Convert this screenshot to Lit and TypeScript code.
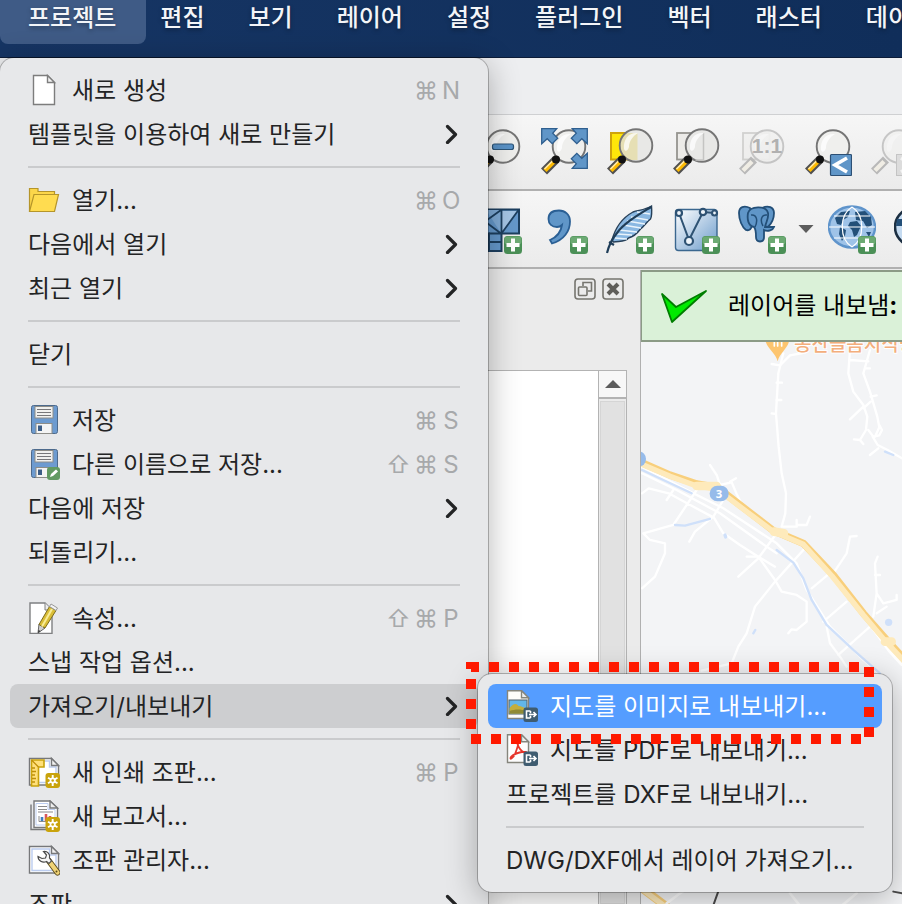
import { LitElement, html, svg, css, nothing } from "lit";
import { customElement, property } from "lit/decorators.js";
import { classMap } from "lit/directives/class-map.js";

type Entry =
  | { kind: "separator" }
  | { kind: "item"; label: string; icon?: string; keys?: string[]; submenu?: boolean; state?: "open" | "selected" };

const sep: Entry = { kind: "separator" };
const item = (label: string, extra: object = {}): Entry => ({ kind: "item", label, ...extra });

const PROJECT_MENU: Entry[] = [
  item("새로 생성", { icon: "file", keys: ["⌘", "N"] }),
  item("템플릿을 이용하여 새로 만들기", { submenu: true }),
  sep,
  item("열기...", { icon: "folder", keys: ["⌘", "O"] }),
  item("다음에서 열기", { submenu: true }),
  item("최근 열기", { submenu: true }),
  sep,
  item("닫기"),
  sep,
  item("저장", { icon: "save", keys: ["⌘", "S"] }),
  item("다른 이름으로 저장...", { icon: "saveAs", keys: ["⇧", "⌘", "S"] }),
  item("다음에 저장", { submenu: true }),
  item("되돌리기..."),
  sep,
  item("속성...", { icon: "properties", keys: ["⇧", "⌘", "P"] }),
  item("스냅 작업 옵션..."),
  item("가져오기/내보내기", { submenu: true, state: "open" }),
  sep,
  item("새 인쇄 조판...", { icon: "layout", keys: ["⌘", "P"] }),
  item("새 보고서...", { icon: "report" }),
  item("조판 관리자...", { icon: "manager" }),
  item("조판", { submenu: true }),
];

const EXPORT_MENU: Entry[] = [
  item("지도를 이미지로 내보내기...", { icon: "exportImage", state: "selected" }),
  item("지도를 PDF로 내보내기...", { icon: "exportPdf" }),
  item("프로젝트를 DXF로 내보내기..."),
  sep,
  item("DWG/DXF에서 레이어 가져오기..."),
];

const MENUS = ["프로젝트", "편집", "보기", "레이어", "설정", "플러그인", "벡터", "래스터", "데이터베이스"];

/* Shared icon fragments */
const floppy = svg`
  <rect x="3.5" y="1.5" width="26" height="28" rx="2" fill="#6d9bd0" stroke="#4d6a8c"/>
  <rect x="7" y="2.500" width="18" height="11.500" fill="#f1f1ef" stroke="#8d8d88"/>
  <path d="M9 5.500h14M9 8.500h14M9 11.500h14" stroke="#77777a" stroke-width="1.200"/>
  <rect x="8" y="19.500" width="16" height="10" fill="#f4f4f4" stroke="#8d8d88"/>
  <rect x="10" y="21.500" width="4" height="5.500" fill="#3c5d86"/>`;

const starBadge = svg`
  <rect x="17.500" y="17" width="14.500" height="15" rx="3" fill="#c9a30c"/>
  <path d="M24.700 19v11M20 21.700l9.500 5.600M29.500 21.700L20 27.300" stroke="#fff" stroke-width="1.900"/>
  <circle cx="24.700" cy="24.500" r="3" fill="#fff"/><circle cx="24.700" cy="24.500" r="1.300" fill="#c9a30c"/>`;

const exportBadge = svg`
  <rect x="17.500" y="17.500" width="14.500" height="14.500" rx="2.500" fill="#3f5c70"/>
  <path d="M24.500 21h-4v7h4M24.500 21v2.300M24.500 28v-2.300M23 24.500h7M27.500 22l2.500 2.500-2.500 2.500" fill="none" stroke="#fff" stroke-width="1.600"/>`;

const sheet = svg`
  <path d="M1.500 2.500h22l7 7v19.500h-29z" fill="#fff" stroke="#77787a" stroke-width="1.400"/>
  <path d="M4 5h17.500v6h6.500v15.500H4z" fill="none" stroke="#bccdf0" stroke-width="1.400"/>
  <path d="M23.500 2.500v7h7z" fill="#f1f1f1" stroke="#77787a" stroke-width="1.400"/>`;

const MENU_ICONS: Record<string, unknown> = {
  file: svg`<path d="M5.500 1.500h14l7 7v22h-21z" fill="#fff" stroke="#7d7d7d" stroke-width="1.400"/>
    <path d="M19.500 1.500v7h7z" fill="#f2f2f2" stroke="#7d7d7d" stroke-width="1.400"/>`,
  folder: svg`<path d="M1.500 27V4.500h8.500v3h16.500V12" fill="#fcd64a" stroke="#b5952a" stroke-width="1.200"/>
    <path d="M1.500 27.500L6 10.500h24.500L26.500 27.500z" fill="#ffdc50" stroke="#b5952a" stroke-width="1.200"/>`,
  save: floppy,
  saveAs: svg`${floppy}<rect x="19" y="19" width="13" height="13" rx="3" fill="#629a62"/>
    <path d="M22 29l1-3 5-4.500 2 2-5 4.500z" fill="#fff"/>`,
  properties: svg`<path d="M2 1h15l7 7v23.500H2z" fill="#fff" stroke="#7f8082" stroke-width="1.400"/>
    <path d="M17 1v7h7" fill="#eee" stroke="#7f8082"/>
    <path d="M10 31l1-9 6 4z" fill="#cfcfcf" stroke="#666"/>
    <path d="M11 22.500L21.500 4.500l6.500 4L17 26z" fill="#d9bd36" stroke="#7c6b1c"/>
    <path d="M14 24.500L24 7" stroke="#f8ec98" stroke-width="2"/>
    <path d="M21.500 4.500l1.500-2.500 6.500 4-1.500 2.500z" fill="#f3f3f3" stroke="#999"/>
    <path d="M10 31l.5-3 2 1z" fill="#333"/>`,
  layout: svg`${sheet}<path d="M3.500 4H16v7h-5.500v19H3.500z" fill="#ffe07a" stroke="#c9a30c" stroke-width="1.600"/>
    <path d="M3.500 4l7 7M4 12h3M4 15.500h4M4 19h3M4 22.500h4M4 26h3" stroke="#c08f0a" stroke-width="1.300"/>${starBadge}`,
  report: svg`<path d="M3 4.500v25h20" fill="none" stroke="#77787a" stroke-width="1.400"/>
    <path d="M6 1h16l7.500 7v19.500H6z" fill="#fff" stroke="#77787a" stroke-width="1.400"/>
    <path d="M8 3.500h12v6h7V25H8z" fill="none" stroke="#bccdf0"/>
    <path d="M22 1v7h7.500z" fill="#eee" stroke="#77787a" stroke-width="1.400"/>
    <path d="M10 6.500h9M10 9.500h9M10 12h15" stroke="#8a8a8c" stroke-width="1.200"/>
    <path d="M11 16v5.500h14" fill="none" stroke="#8a8a8c"/>
    <path d="M14 21v-4" stroke="#3f7fc0" stroke-width="2.600"/><path d="M18 21v-7" stroke="#d9565a" stroke-width="2.600"/><path d="M22 21v-5" stroke="#d9565a" stroke-width="2.600"/>${starBadge}`,
  manager: svg`${sheet}
    <path d="M21 17l8.500 11.500" stroke="#5a4a1a" stroke-width="6" stroke-linecap="round"/>
    <path d="M21 17l8.500 11.500" stroke="#f0d376" stroke-width="4.200" stroke-linecap="round"/>
    <path d="M10 12.500c0 4 4.500 7 8.500 5l2.500 2 2.500-2.500-2-3c1-4-2-7-6-6.500l3 3.500-1 3-3.500.5z" fill="#f6f6f6" stroke="#4c4c4c" stroke-width="1.200"/>
    <circle cx="28.500" cy="27.500" r="1" fill="#5a4a1a"/>`,
  exportImage: svg`<path d="M1.500.700h14l7 7V28.500h-21z" fill="#fdfdfb" stroke="#85857c" stroke-width="1.400"/>
    <path d="M15.500.700v7h7z" fill="#eee" stroke="#85857c" stroke-width="1.400"/>
    <rect x="3" y="10" width="18" height="14" fill="#62b6ea" stroke="#50606c"/>
    <path d="M3.500 18c4-5 7-5 9-2 3 0 5 2 8 2v5.500h-17z" fill="#c3ae3c"/>
    <path d="M3.500 21c6-2 11-2 17 0v2.500h-17z" fill="#8f8a35"/>${exportBadge}`,
  exportPdf: svg`<path d="M1.500.700h14l7 7V28.500h-21z" fill="#fdfdfd" stroke="#85857c" stroke-width="1.400"/>
    <path d="M15.500.700v7h7z" fill="#eee" stroke="#85857c" stroke-width="1.400"/>
    <path d="M12 8c-2 1 2 10 8 11 3-2-9-2-15 4-2 3 2 2 4-3s4-10 3-12z" fill="none" stroke="#e5352b" stroke-width="1.800"/>${exportBadge}`,
};

const handle = svg`
  <path d="M16 33.500L4 45.500" stroke="#505050" stroke-width="8.500"/>
  <path d="M14 35.500L5 44.500" stroke="#fcb900" stroke-width="4.500"/>
  <path d="M13 34.500L4.500 43" stroke="#ffe9a8" stroke-width="1.600"/>
  <circle cx="16" cy="33.500" r="4" fill="#111"/>`;

const fadedHandle = svg`
  <path d="M16 33.500L4 45.500" stroke="#555" stroke-width="8.500"/>
  <path d="M14 35.500L5 44.500" stroke="#f4ecd4" stroke-width="4.500"/>`;

const lens = svg`
  <circle cx="29" cy="20.500" r="16.300" fill="#eeeeec" fill-opacity=".9" stroke="#757575" stroke-width="1.900"/>
  <path d="M17 24C16 14 22 7 31 8c-5 3-9 8-9 14-1 4-4 5-5 2z" fill="#fff" fill-opacity=".75"/>`;

const plus = svg`
  <rect x="30" y="33" width="18" height="18" rx="3.500" fill="#4b9057"/>
  <rect x="30.500" y="33.500" width="17" height="8" rx="3" fill="#6caa73"/>
  <path d="M39 35.500v13M32.500 42h13" stroke="#fff" stroke-width="4"/>`;

const TOOL_ICONS: Record<string, unknown> = {
  zoomOut: svg`${lens}${handle}<rect x="18.500" y="18" width="21" height="5.500" rx="2" fill="#5a93c8" stroke="#2d5578" stroke-width="1.200"/>`,
  zoomFull: svg`${lens}${handle}<g fill="#6096c8" stroke="#2f5f8f" stroke-width="1.300">
    <path d="M1.700 2.700h15l-4 4.500 5 5-5.500 5.500-5-5-5.500 5z"/>
    <path d="M47.300 2.700h-15l4 4.500-5 5 5.500 5.500 5-5 5.500 5z"/>
    <path d="M47.300 42.300h-15l4-4.500-5-5 5.500-5.500 5 5 5.500-5z"/></g>`,
  zoomSelection: svg`<rect x="5" y="7" width="26.500" height="26.500" fill="#ffe60a" stroke="#cfa30c" stroke-width="2"/>
    <circle cx="30" cy="19.500" r="16.300" fill="#e8e8e6"/>
    <path d="M31.500 7V34H23A16.300 16.300 0 0 1 19.500 7z" fill="#e6dfb4"/>
    <circle cx="30" cy="19.500" r="16.300" fill="none" stroke="#757575" stroke-width="1.900"/>
    <path d="M18 23C17 13 23 6 32 7c-5 3-9 8-9 14-1 4-4 5-5 2z" fill="#fff" fill-opacity=".75"/>${handle}`,
  zoomLayer: svg`<rect x="5" y="7" width="26.500" height="26.500" fill="#ecebe8" stroke="#95948f" stroke-width="1.800"/>
    <circle cx="30" cy="19.500" r="16.300" fill="#e8e8e6" stroke="#757575" stroke-width="1.900"/>
    <path d="M31.500 7v27h-8" fill="none" stroke="#c4c4c2" stroke-width="1.500"/>
    <path d="M18 23C17 13 23 6 32 7c-5 3-9 8-9 14-1 4-4 5-5 2z" fill="#fff" fill-opacity=".75"/>${handle}`,
  zoomNative: svg`<g opacity=".35"><rect x="5" y="7" width="26.500" height="26.500" fill="#ecebe8" stroke="#95948f" stroke-width="1.800"/>${lens}${fadedHandle}</g>
    <text class="ratio" x="29" y="27" text-anchor="middle">1:1</text>`,
  zoomLast: svg`${lens}${handle}<rect x="26.500" y="28.500" width="21" height="21" rx="1" fill="#6096c8" stroke="#2c4f74" stroke-width="1.200"/>
    <path d="M43 32L31 39l12 7" fill="none" stroke="#fff" stroke-width="3.600"/>`,
  zoomNext: svg`<g opacity=".35">${lens}${fadedHandle}
    <rect x="26.500" y="28.500" width="21" height="21" fill="#bbb" stroke="#777"/><path d="M31 32l12 7-12 7" fill="none" stroke="#fff" stroke-width="3.600"/></g>`,
  mesh: svg`<path d="M2 6.500h43v24H27.500v17.500H15V30.500H2z" fill="#6598cb" stroke="#1d3f5f" stroke-width="2"/>
    <path d="M28 30V8h16z" fill="#a5c5e5"/><path d="M12 7l15 0v23z" fill="#7fabd6"/>
    <path d="M27.500 6.500v24M27.500 30.500L44.500 7M27 7L11 18.500 27 30.500M15 30.500h12.500M15 39h12.500" fill="none" stroke="#1d3f5f" stroke-width="1.800"/>${plus}`,
  comma: svg`<path d="M19 7.500C12 7.500 8.500 11 8.500 16s3.500 8 8.500 8c2 0 3.500-.5 5-2-1 7-5 12-12 15l2 3.500C24 37 30 28 30 18.500 30 11.500 25 7.500 19 7.500z" fill="#6096c8" stroke="#2a5f94" stroke-width="1.800"/>${plus}`,
  feather: svg`<path d="M6 37C9 26 16 15 27 9c6-2 12-2 18.500-6 .5 6 .5 10-1 13-4 3-6 7-10 10-3 4-8 8-12 9-3 4-8 3-15 4z" fill="#8ab8e2" stroke="#274059" stroke-width="1.400"/>
    <path d="M25 14l17 3M21 18l18 3M17 22l18 3M13 27l18 2M11 31l15 1M9 35l12 1M31 9l13 2" stroke="#e9f3fb" stroke-width="1.300"/>
    <path d="M1 50c2-8 4-13 10-20C18 20 32 12 45 4M3 39l5 3" fill="none" stroke="#1f3d58" stroke-width="2.200"/>${plus}`,
  nodes: svg`<defs><linearGradient id="nodeFill" x1="0" y1="0" x2="1" y2="1"><stop offset="0" stop-color="#fff"/><stop offset="1" stop-color="#6b9bcb"/></linearGradient></defs>
    <rect x="3.500" y="6.500" width="41.500" height="41" rx="3" fill="url(#nodeFill)" stroke="#3b678f" stroke-width="1.400"/>
    <path d="M7 10l10 27L31 9l12 1" fill="none" stroke="#2e5273" stroke-width="2"/>
    <g fill="#eef4fa" stroke="#2e5273" stroke-width="2.200"><circle cx="7" cy="10" r="3"/><circle cx="17" cy="38" r="4"/><circle cx="31" cy="9" r="3.200"/><circle cx="42.500" cy="10" r="2.500"/></g>${plus}`,
  elephant: svg`<g fill="#6096c8" stroke="#234f78" stroke-width="1.800">
    <path d="M12 5C6 2 1 4 1 10c0 7 3 14 7 17 3 1 5-1 6-4z"/>
    <path d="M24 5c6-3 12-1 12 5s-3 11-6 14l-6-1z"/>
    <path d="M10 10c2-7 18-8 20 0 1 5-2 9-3 14l9 0c-1 3-6 5-10 3v7c0 6-8 6-8 0 0-5 0-8-2-10-6-1-7-8-6-14z"/></g>
    <path d="M13 12c6-1 7 6 4 12M29 12c-6-1-7 6-4 11" fill="none" stroke="#234f78" stroke-width="1.500"/>${plus}`,
  globe: svg`<ellipse cx="24" cy="24" rx="23" ry="20.500" fill="#9fc3e8" stroke="#5f94cb" stroke-width="2.400"/>
    <path d="M7 15l6-6 9-1-2 6-5 3-2 5-4-1zM12 24l6 3-1 6-3 5-3-7zM27 9l10-1 6 6 1 8-5 3-4-7-7-1zM22 19l7-1 4 5-4 9-3 2-2-7-4-4zM38 29l5 0-2 5z" fill="#234f78"/>
    <path d="M1 24h46M6 13h36M6 35h28M24 4c-13 8-13 32 0 40M24 4c13 8 13 32 0 40" fill="none" stroke="#fff" stroke-width="1.200"/>${plus}`,
  globeDark: svg`<ellipse cx="24" cy="24" rx="23" ry="20.500" fill="#c5dbf1" stroke="#1c2f42" stroke-width="2.600"/><path d="M3 16h20v7H2z" fill="#234f78"/>`,
};

@customElement("menu-panel")
class MenuPanel extends LitElement {
  @property({ attribute: false }) entries: Entry[] = [];
  @property() label = "";

  static styles = css`
    :host {
      display: block;
      box-sizing: border-box;
      padding: 10px;
      font: 400 24px/44px Inter, "Noto Sans CJK KR", sans-serif;
      color: #232425;
      background: #e7e8ea;
      border-radius: 14px;
      box-shadow: 0 0 0 1px rgba(0, 0, 0, 0.25), 0 6px 32px rgba(0, 0, 0, 0.3);
    }
    .row {
      display: flex;
      align-items: center;
      gap: 12px;
      width: 100%;
      height: 44px;
      margin: 0;
      padding: 0 18px;
      border: 0;
      border-radius: 8px;
      background: none;
      color: inherit;
      font: inherit;
      text-align: left;
      white-space: nowrap;
    }
    .open { background: #cdced0; }
    .selected { background: #559dff; color: #fff; }
    .icon { flex: none; width: 32px; height: 32px; }
    .text { flex: 1; padding-top: 2px; }
    .keys { display: flex; gap: 4px; padding-top: 2px; color: #a7a9ab; }
    .key { width: 18px; text-align: center; }
    .mod { width: 24px; }
    .arrow { flex: none; width: 16px; height: 20px; }
    .line { height: 2px; margin: 10px 18px; border: 0; background: #cacbcd; }
  `;

  render() {
    return html`<div role="menu" aria-label=${this.label}>
      ${this.entries.map((e) =>
        e.kind === "separator"
          ? html`<hr class="line" />`
          : html`<button role="menuitem" class=${classMap({ row: true, open: e.state === "open", selected: e.state === "selected" })}>
              ${e.icon ? html`<svg class="icon" viewBox="0 0 32 32" aria-hidden="true">${MENU_ICONS[e.icon]}</svg>` : nothing}
              <span class="text">${e.label}</span>
              ${e.keys
                ? html`<span class="keys">${e.keys.map((k) => html`<span class=${classMap({ key: true, mod: k === "⌘" || k === "⇧" })}>${k}</span>`)}</span>`
                : nothing}
              ${e.submenu
                ? html`<svg class="arrow" viewBox="0 0 16 20" aria-hidden="true"><path d="M3.500 2.500L11.500 10.500 3.500 18.500" fill="none" stroke="#232425" stroke-width="3.200" stroke-linecap="round" stroke-linejoin="round"/></svg>`
                : nothing}
            </button>`
      )}
    </div>`;
  }
}

@customElement("map-canvas")
class MapCanvas extends LitElement {
  static styles = css`
    :host { display: block; background: #f3f4f6; overflow: hidden; }
    svg { display: block; width: 100%; height: 100%; }
    .place { font: 500 57px "Noto Sans CJK KR", sans-serif; fill: #f3ae7c; stroke: #fff; stroke-width: 6px; paint-order: stroke; }
    .route { font: 700 34px "Noto Sans", sans-serif; fill: #fff; }
  `;
  render() {
    return html`<svg role="img" aria-label="지도">
      <g transform="translate(-11 -2) scale(.3333)" fill="none" stroke-linecap="round" stroke-linejoin="round">
        <g stroke="#fff" stroke-width="7">
          <path d="M460 40L445 100 438 220 446 320 455 400 468 460 466 520 455 560"/>
          <path d="M425 72l25 4 30-30 45-8M440 128l16 0M440 180l14 0M425 220l12 2"/>
          <path d="M660 30L655 100 670 155 700 195 712 230 708 270 690 300 672 298M700 200l-40 38M720 30L700 100 720 155 742 230 748 262 735 290M722 185l-22 20M715 270l15 20 18-4 8-16-8-15M728 290l15 25 30 15 43 25M660 60l55 4M705 85l15 0M722 170l18-4M690 300l10 12M745 325l-25 20"/>
          <path d="M240 375l20 30 10 30 35-8 15 35 20 40M300 425l18-10"/>
          <path d="M36 380L150 440 280 505 440 610 500 670 530 750 600 860 700 960 760 1010"/>
          <path d="M36 400L140 450 270 520 410 620 440 640"/>
          <path d="M36 460l20-15 60 15 55 30 75 40M110 480l20-30M200 450L130 555 40 580 60 600 105 610 105 640 75 710 36 745"/>
          <path d="M280 480L250 530 195 575 178 605M250 530l30 50 50 35 55 35 50 70 20 35 45 10 30 20 0 60-30 25-15-2-10 12"/>
          <path d="M440 580L385 655 325 710M350 650l35 0 50 30M520 630L435 725 375 800 350 880 325 920 305 970 215 992"/>
          <path d="M460 560l40 0 0-20M500 555l30 0 10-25M610 700L650 640 660 590 680 588M545 745l60-50M580 845L650 785M625 945L720 860M730 830l10-70-5-90 8-20M735 705l15 0M740 760l20 30 40-10 0-15M740 820l30-20M590 860l10 50 30 40 20 30"/>
          <path d="M600 695L700 820 780 930 816 970" stroke-width="16"/>
        </g>
        <g stroke="#cfe0fa" stroke-width="7">
          <path d="M36 390L185 460M135 555l30 2 75-20M440 630L490 668 520 715 545 780 590 855 670 930 750 1000M370 880l6-10M765 335l25 10"/>
          <path d="M285 585l2 6" stroke-width="10"/>
        </g>
        <circle cx="776" cy="847" r="11" fill="#cfe0fa"/>
        <path d="M40 370L120 405 200 432 262 442 330 495 430 572 520 610 610 705 700 820 770 900 830 965" stroke="#f8cf7c" stroke-width="22"/>
        <path d="M40 375L120 409 200 438 262 448 330 500 430 575 520 613 606 708 700 825 765 902 830 972" stroke="#feeabb" stroke-width="16"/>
        <path d="M200 438l60 0M432 575l30 5M765 905l20 0" stroke="#feeabb" stroke-width="26"/>
        <path d="M30 1640L110 1700" stroke="#f8cf7c" stroke-width="26"/><path d="M30 1643L110 1703" stroke="#feeabb" stroke-width="16"/>
        <path d="M270 1640L245 1710M790 1655L900 1675" stroke="#4a4a4a" stroke-width="6"/>
        <path d="M110 1690l40-30 60-40M480 1660l40 50M620 1710l60-50" stroke="#fff" stroke-width="8"/>
        <ellipse cx="28" cy="357" rx="20" ry="22" fill="#96bbea"/>
        <rect x="239" y="437" width="57" height="47" rx="23" fill="#96bbea"/>
        <path d="M443 64C436 35 405 25 405-10h74C479 25 450 35 443 64z" fill="#fdc56f"/>
        <path d="M433 0v18M443 0v18M455 0v18" stroke="#fff" stroke-width="5"/>
        <text class="route" x="267" y="473" text-anchor="middle">3</text>
        <text class="place" x="492" y="32">동산들봄지식당</text>
      </g>
    </svg>`;
  }
}

@customElement("app-root")
class AppRoot extends LitElement {
  static styles = css`
    :host {
      display: flex;
      flex-direction: column;
      position: relative;
      height: 100vh;
      overflow: hidden;
      background: #ebebeb;
      font: 500 24px/36px Inter, "Noto Sans CJK KR", sans-serif;
    }
    button { margin: 0; padding: 0; border: 0; background: none; font: inherit; color: inherit; }
    .menubar {
      flex: none;
      display: flex;
      align-items: flex-start;
      height: 58px;
      box-sizing: border-box;
      border-bottom: 1px solid #0c1c38;
      background: linear-gradient(90deg, #163564, #102e5a);
      color: #f3f5f8;
      overflow: hidden;
    }
    .menubar button { flex: none; height: 44px; padding: 0 22px 10px; white-space: nowrap; text-shadow: 0 2px 4px rgba(0, 0, 0, 0.35); }
    .menubar .current { padding: 0 30px 10px 28px; margin-right: -8px; border-radius: 0 0 8px 8px; background: #3f5b86; }
    .titlestrip { flex: none; height: 56px; background: #edeef0; }
    .toolbar {
      flex: none;
      display: flex;
      align-items: center;
      gap: 18px;
      height: 78px;
      box-sizing: border-box;
      padding-left: 474px;
      border-bottom: 2px solid #b0b0b0;
      background: linear-gradient(#f6f6f6, #ebebeb);
      overflow: hidden;
    }
    .first { height: 77px; border-top: 1px solid #cfd0d2; }
    .tool { flex: none; display: flex; align-items: center; }
    .tool svg { display: block; width: 48px; height: 52px; }
    .tool .drop { width: 24px; height: 8px; overflow: visible; }
    .ratio { font: 700 21px "Liberation Sans", sans-serif; fill: #b1b1b1; }
    .work { flex: 1; display: flex; min-height: 0; padding-top: 1px; }
    .dock { flex: 0 0 640px; display: flex; flex-direction: column; box-sizing: border-box; padding: 8px 13px 0 0; }
    .dockhead { display: flex; justify-content: flex-end; gap: 6px; height: 92px; padding-right: 3px; }
    .dockhead button { width: 22px; height: 22px; }
    .dockhead svg { display: block; }
    .tree { flex: 1; display: flex; justify-content: flex-end; border: 1px solid #b3b3b3; border-width: 1px 1px 0 0; background: #fff; }
    .scroll { display: flex; flex-direction: column; width: 28px; box-sizing: border-box; border-left: 1px solid #b3b3b3; background: #ebebeb; }
    .up { height: 28px; border-bottom: 2px solid #b3b3b3; background: #f7f7f7; }
    .up svg { display: block; margin: 0 auto; }
    .thumb { flex: 1; margin: 2px 1px 0; border: 1px solid #d5d5d5; background: #e1e1e1; }
    .view { flex: 1; display: flex; flex-direction: column; min-width: 0; border-left: 1px solid #b0b0b0; }
    .message {
      flex: none;
      display: flex;
      align-items: center;
      gap: 20px;
      height: 72px;
      box-sizing: border-box;
      padding-left: 18px;
      border: 2px solid #8b9b86;
      border-width: 2px 0 2px 1px;
      background: #daf1d8;
      color: #000;
      font-weight: 400;
      white-space: nowrap;
      overflow: hidden;
    }
    .message svg { flex: none; width: 48px; height: 36px; }
    map-canvas { flex: 1; min-height: 0; }
    .project { position: absolute; top: 58px; left: 0; width: 488px; }
    .export { position: absolute; top: 674px; left: 478px; width: 414px; }
    .marker { position: absolute; top: 662px; left: 466px; width: 408px; height: 82px; pointer-events: none; }
  `;

  private tool(name: string, label: string) {
    return html`<button class="tool" aria-label=${label}>
      <svg viewBox="0 0 48 52">${TOOL_ICONS[name]}</svg>
      ${name === "elephant" ? html`<svg class="drop" viewBox="0 0 24 8"><path d="M12.500 0h15L20 8z" fill="#5c5c5c"/></svg>` : nothing}
    </button>`;
  }

  render() {
    return html`
      <nav class="menubar">
        ${MENUS.map((m, i) => html`<button class=${classMap({ current: i === 0 })}>${m}</button>`)}
      </nav>
      <div class="titlestrip"></div>
      <div class="toolbar first" role="toolbar">
        ${this.tool("zoomOut", "축소")}${this.tool("zoomFull", "전체 보기")}${this.tool("zoomSelection", "선택 영역 확대")}
        ${this.tool("zoomLayer", "레이어 확대")}${this.tool("zoomNative", "원본 해상도")}${this.tool("zoomLast", "이전 보기")}${this.tool("zoomNext", "다음 보기")}
      </div>
      <div class="toolbar" role="toolbar">
        ${this.tool("mesh", "메시 추가")}${this.tool("comma", "텍스트 추가")}${this.tool("feather", "SpatiaLite 추가")}
        ${this.tool("nodes", "가상 레이어 추가")}${this.tool("elephant", "PostGIS 추가")}${this.tool("globe", "WMS 추가")}${this.tool("globeDark", "WFS 추가")}
      </div>
      <main class="work">
        <section class="dock">
          <div class="dockhead">
            <button aria-label="분리"><svg width="22" height="22" fill="none" stroke="#76756f" stroke-width="1.600"><rect x="1" y="1" width="20" height="20" rx="3"/><path d="M9 8V4.500h8.500V13H14"/><rect x="4.500" y="9" width="8.500" height="8.500" rx="1"/></svg></button>
            <button aria-label="닫기"><svg width="22" height="22" fill="none" stroke="#76756f" stroke-width="1.600"><rect x="1" y="1" width="20" height="20" rx="3"/><path d="M6 6l10 10M16 6L6 16" stroke="#5f5e5a" stroke-width="4"/></svg></button>
          </div>
          <div class="tree">
            <div class="scroll">
              <button class="up" aria-label="위로"><svg width="16" height="8"><path d="M0 8L8 0l8 8z" fill="#5c5c5c"/></svg></button>
              <div class="thumb"></div>
            </div>
          </div>
        </section>
        <section class="view">
          <div class="message" role="status">
            <svg viewBox="0 0 48 36" aria-hidden="true"><path d="M2 6l14 13L46 3 12 34z" fill="#00ea00" stroke="#007d00" stroke-width="1.800" stroke-linejoin="round"/></svg>
            <span>레이어를 내보냄<b>:</b></span>
          </div>
          <map-canvas></map-canvas>
        </section>
      </main>
      <menu-panel class="project" label="프로젝트" .entries=${PROJECT_MENU}></menu-panel>
      <menu-panel class="export" label="가져오기/내보내기" .entries=${EXPORT_MENU}></menu-panel>
      <svg class="marker" viewBox="0 0 408 82" fill="none" stroke="#ff1900" stroke-width="10" aria-hidden="true">
        <path d="M0 3.500H13" stroke-width="7"/><path d="M5 5H13"/>
        <path d="M23 5H394" stroke-dasharray="10 10"/>
        <path d="M403 5V76" stroke-dasharray="10 10"/>
        <path d="M5 77H396" stroke-dasharray="10 10"/>
        <path d="M5 17V68" stroke-dasharray="10 10"/>
      </svg>
    `;
  }
}
